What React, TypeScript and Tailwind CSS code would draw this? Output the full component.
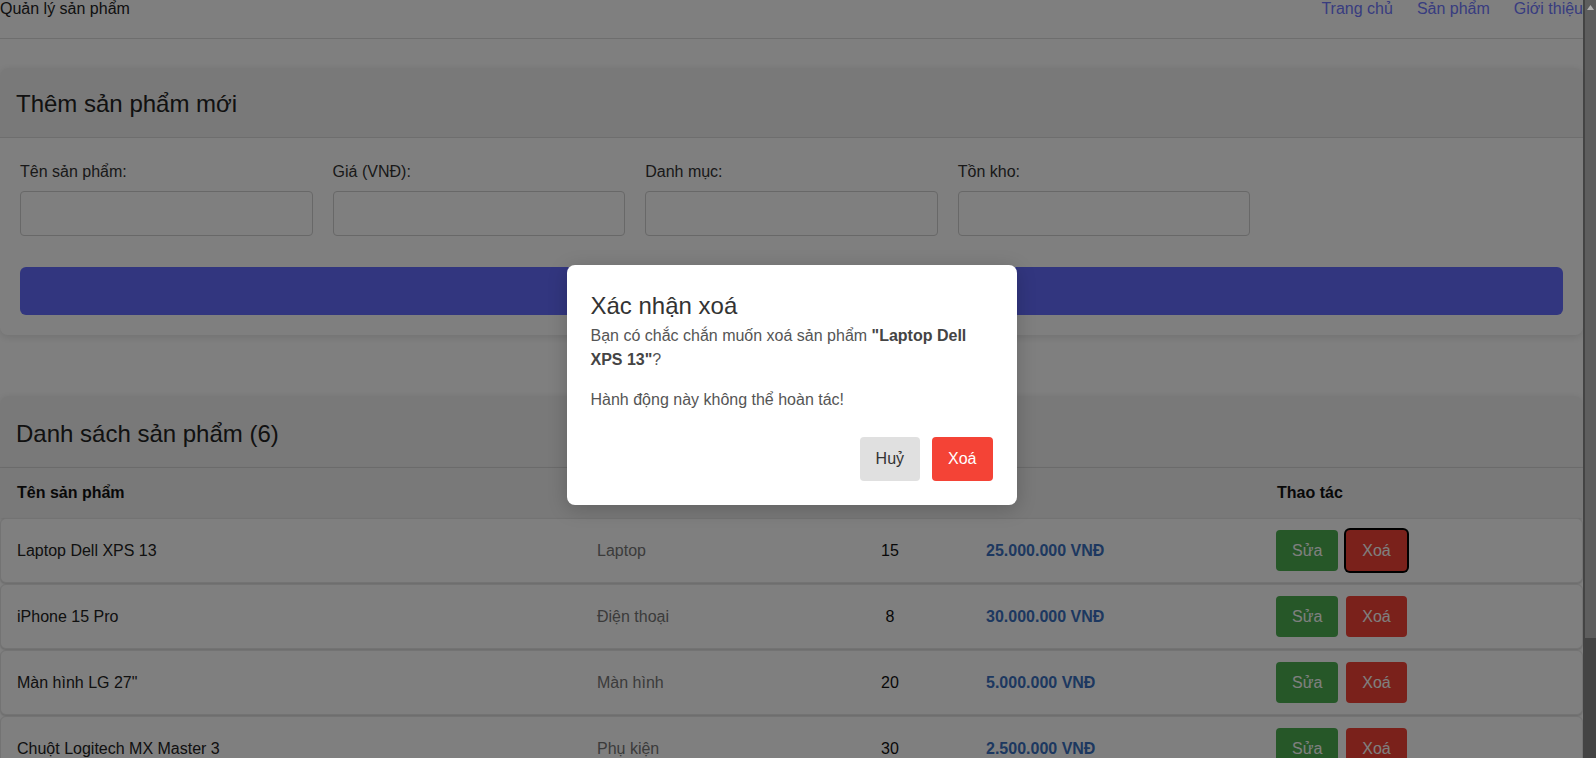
import React from "react";

const products = [
  { name: "Laptop Dell XPS 13", cat: "Laptop", stock: 15, price: "25.000.000 VNĐ" },
  { name: "iPhone 15 Pro", cat: "Điện thoại", stock: 8, price: "30.000.000 VNĐ" },
  { name: 'Màn hình LG 27"', cat: "Màn hình", stock: 20, price: "5.000.000 VNĐ" },
  { name: "Chuột Logitech MX Master 3", cat: "Phụ kiện", stock: 30, price: "2.500.000 VNĐ" },
  { name: "Bàn phím cơ Keychron K2", cat: "Phụ kiện", stock: 25, price: "2.000.000 VNĐ" },
  { name: "Tai nghe Sony WH-1000XM5", cat: "Âm thanh", stock: 12, price: "8.000.000 VNĐ" },
];

const fields = ["Tên sản phẩm:", "Giá (VNĐ):", "Danh mục:", "Tồn kho:"];

export default function App() {
  return (
    <div className="flex h-[758px] w-[1596px] overflow-hidden bg-white font-['Liberation_Sans',Arial,sans-serif] text-base">
      {/* main page */}
      <div className="relative h-full w-[1583px] overflow-hidden bg-white">
        <header className="flex h-[39px] items-start justify-between border-b border-[#dddddd]">
          <div className="leading-[18px] text-[#222]">Quản lý sản phẩm</div>
          <nav className="flex gap-6 leading-[18px] text-[#7078ff]">
            <a>Trang chủ</a>
            <a>Sản phẩm</a>
            <a>Giới thiệu</a>
          </nav>
        </header>

        {/* add product card */}
        <section className="mt-[29px] rounded-lg bg-white shadow-[0_2px_8px_rgba(0,0,0,0.12)]">
          <div className="flex h-[70px] items-center rounded-t-lg border-b border-[#dddddd] bg-[#f2f2f2] pl-4 pt-[2px]">
            <h2 className="text-[24px] leading-[29px] text-[#222]">Thêm sản phẩm mới</h2>
          </div>
          <div className="px-5 pb-5 pt-[25px]">
            <div className="grid grid-cols-5 gap-5">
              {fields.map((f) => (
                <div key={f} className="flex flex-col">
                  <label className="leading-[18px] text-[#333]">{f}</label>
                  <input className="mt-[10px] h-[45px] rounded-[4px] border border-[#d0d0d0] bg-white px-3" />
                </div>
              ))}
            </div>
            <button className="mt-[31px] h-12 w-full rounded-md bg-[#646cff] font-bold text-white">
              Thêm sản phẩm
            </button>
          </div>
        </section>

        {/* list card */}
        <section className="mt-[61px] rounded-lg bg-white shadow-[0_2px_8px_rgba(0,0,0,0.12)]">
          <div className="flex h-[72px] items-center rounded-t-lg border-b border-[#dddddd] bg-[#f2f2f2] pl-4 pt-[4px]">
            <h2 className="text-[24px] leading-[29px] text-[#222]">Danh sách sản phẩm (6)</h2>
          </div>
          <div className="grid h-[50px] grid-cols-[580px_229px_160px_292px_1fr] items-center bg-[#f2f2f2] font-bold text-[#111] shadow-[0_1px_3px_rgba(0,0,0,0.15)]">
            <div className="pl-[17px]">Tên sản phẩm</div>
            <div className="pl-4">Danh mục</div>
            <div className="text-center">Tồn kho</div>
            <div className="pl-4">Giá</div>
            <div className="pl-4">Thao tác</div>
          </div>
          <div className="flex flex-col gap-px">
            {products.map((p, i) => (
              <div
                key={p.name}
                className="grid h-[65px] grid-cols-[580px_229px_160px_292px_1fr] items-center rounded-md border border-[#e6e6e6] bg-white shadow-[0_1px_2px_rgba(0,0,0,0.18)]"
              >
                <div className="pl-4 pt-px text-[#222]">{p.name}</div>
                <div className="pl-4 pt-px text-[#777]">{p.cat}</div>
                <div className="pt-px text-center text-[#111]">{p.stock}</div>
                <div className="pl-4 pt-px font-bold text-[#3a70c0]">{p.price}</div>
                <div className="flex gap-2 pl-[14px]">
                  <button className="h-[41px] rounded-[4px] bg-[#4caf50] px-4 text-white">Sửa</button>
                  <button
                    className={
                      i === 0
                        ? "h-[41px] rounded-[4px] bg-[#f44336] px-4 text-white ring-2 ring-black"
                        : "h-[41px] rounded-[4px] bg-[#f44336] px-4 text-white"
                    }
                  >
                    Xoá
                  </button>
                </div>
              </div>
            ))}
          </div>
        </section>

        {/* modal overlay */}
        <div className="absolute inset-0 flex items-center justify-center bg-black/50 pt-[12px]">
          <div className="w-[450px] rounded-lg bg-white p-6 shadow-[0_4px_20px_rgba(0,0,0,0.2)]">
            <h3 className="mt-[2px] text-[24px] leading-[29px] text-[#333]">Xác nhận xoá</h3>
            <p className="mt-1 leading-6 text-[#555]">
              Bạn có chắc chắn muốn xoá sản phẩm{" "}
              <strong className="text-[#444]">"Laptop Dell XPS 13"</strong>?
            </p>
            <p className="mt-4 leading-6 text-[#555]">Hành động này không thể hoàn tác!</p>
            <div className="mt-[25px] flex justify-end gap-3">
              <button className="h-11 rounded-[4px] bg-[#e0e0e0] px-4 text-[#333]">Huỷ</button>
              <button className="h-11 rounded-[4px] bg-[#f44336] px-4 text-white">Xoá</button>
            </div>
          </div>
        </div>
      </div>

      {/* scrollbar */}
      <div className="flex h-full w-[13px] flex-col bg-[#444] pl-[2px]">
        <div className="flex h-[14px] items-center justify-center bg-[#5e5e5e]">
          <svg width="7" height="5" viewBox="0 0 7 5">
            <polygon points="3.5,0 7,5 0,5" fill="#b0b0b0" />
          </svg>
        </div>
        <div className="h-[624px] bg-[#5e5e5e]" />
      </div>
    </div>
  );
}
